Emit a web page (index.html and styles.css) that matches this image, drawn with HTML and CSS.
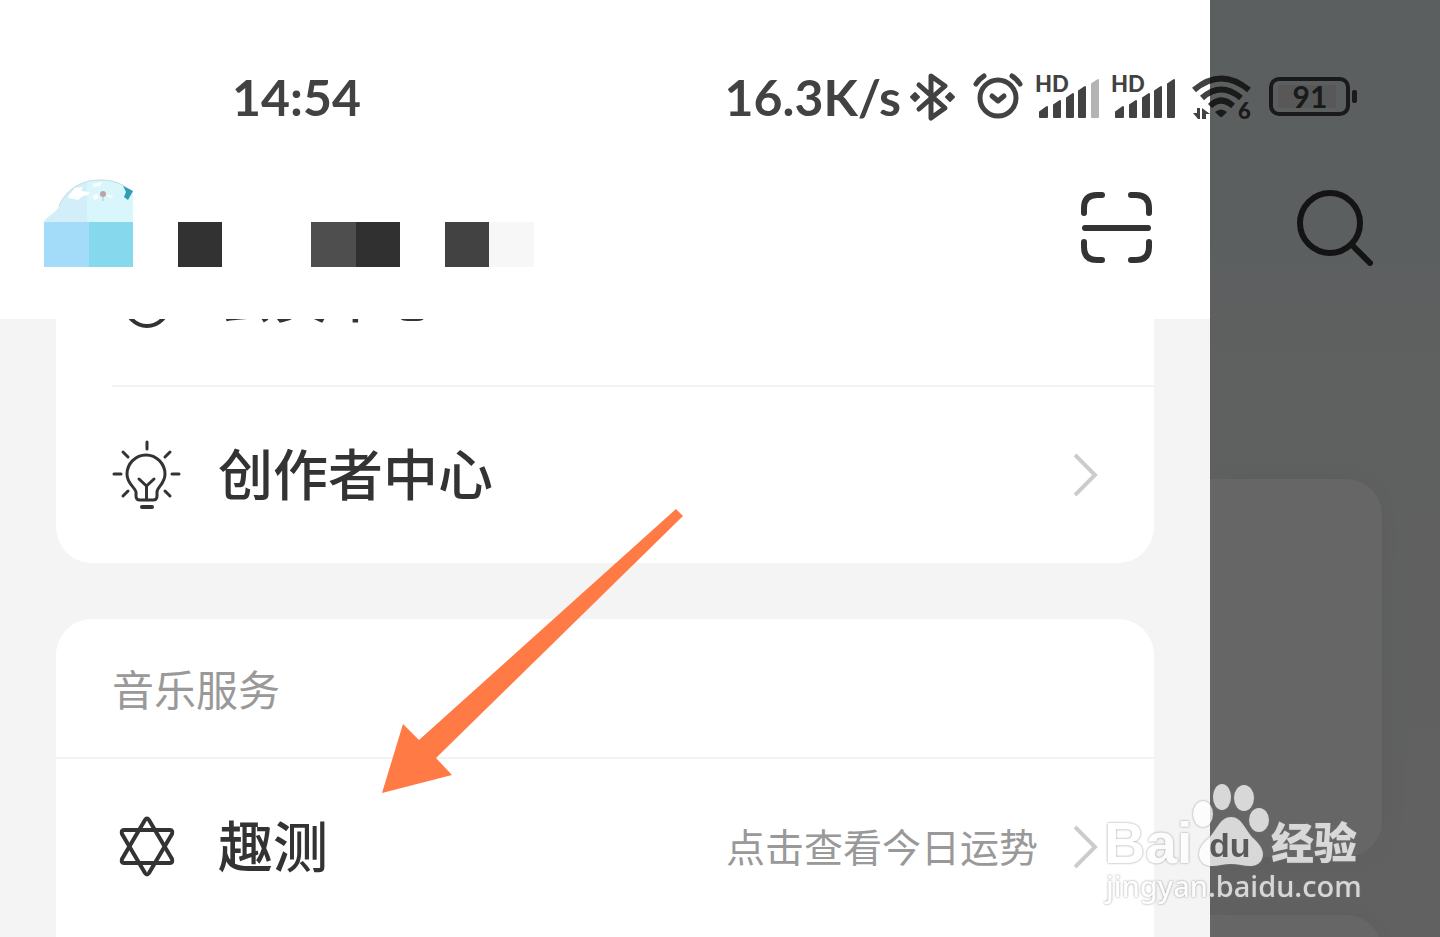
FILE: index.html
```html
<!DOCTYPE html>
<html lang="zh-CN">
<head>
    <meta charset="UTF-8">
    <meta name="viewport" content="width=device-width, initial-scale=1.0">
    <title>音乐服务</title>
    <link rel="stylesheet" href="styles.css">
</head>
<body>

    <div class="screen">
        <main class="drawer">
            <header class="drawer-header">
                <svg class="profile" viewBox="0 0 490 100" width="490" height="100">
                    <path d="M0 44 C4 37 12 35 15 28 C23 10 38 2 57 2 C70 2 79 6 89 14 V44 Z" fill="#d2eef8"/>
                    <path d="M43 3 C60 -1 77 5 89 14 V44 H43 Z" fill="#d8f6fc"/>
                    <path d="M25 17 L31 10 L39 9 L37 13 L46 14 L44 17 L39 18 L34 22 L24 20 Z M49 6 L58 4 L56 8 L50 9 Z M49 18 L53 16 L55 20 L50 22 Z M62 17 L70 18 L66 20 Z" fill="#fff"/>
                    <path d="M15 28 C23 10 38 2 57 2 C70 2 79 6 89 14" fill="none" stroke="#c2dde2"/>
                    <circle cx="59" cy="16" r="3" fill="#b9a5a5"/>
                    <path d="M59 19 V23" stroke="#b9c5c8"/>
                    <path d="M79 8 L89 13 L84 22 L80 19 L82 14 Z" fill="#319db5"/>
                    <rect x="0" y="44" width="45" height="45" fill="#a2dcf9"/>
                    <rect x="45" y="44" width="44" height="45" fill="#86d8ec"/>
                    <rect x="134" y="44" width="44" height="45" fill="#323232"/>
                    <rect x="267" y="44" width="45" height="45" fill="#4e4e4e"/>
                    <rect x="312" y="44" width="44" height="45" fill="#303030"/>
                    <rect x="401" y="44" width="44" height="45" fill="#424242"/>
                    <rect x="445" y="44" width="45" height="45" fill="#f7f7f7"/>
                </svg>
                <button class="icon-button" type="button" aria-label="扫一扫">
                    <svg viewBox="0 0 72 72" width="72" height="72" fill="none" stroke="#333" stroke-width="6" stroke-linecap="round">
                        <path d="M3 21 V16 Q3 3 16 3 H21 M50 3 H55 Q68 3 68 16 V21 M68 50 V55 Q68 68 55 68 H50 M21 68 H16 Q3 68 3 55 V50 M4 36 H67"/>
                    </svg>
                </button>
            </header>

            <div class="list-view">
                <div class="list">
                    <section class="card">
                        <a class="row" href="#vip">
                            <svg class="row-icon" viewBox="0 0 70 70" width="70" height="70" fill="none" stroke="#333" stroke-width="4">
                                <circle cx="35" cy="43" r="21"/>
                            </svg>
                            <span class="row-name">会员中心</span>
                            <svg class="chevron" viewBox="0 0 24 44" width="24" height="44"><path d="M1 2 L21 22 L1 42"/></svg>
                        </a>
                        <hr class="divider inset">
                        <a class="row" href="#creator">
                            <svg class="row-icon" viewBox="0 0 70 70" width="70" height="70" fill="none" stroke="#333" stroke-width="3" stroke-linecap="round" stroke-linejoin="round">
                                <path d="M24 52 C23 47 15 44 15 34 A19 19 0 0 1 53 34 C53 44 45 47 45 52 V56 Q45 60 41 60 H28 Q24 60 24 56 Z M34.500 60 V46 M27 39 L34.500 46 L42 39"/>
                                <path d="M35 2 V9 M2 34 H9 M60 34 H67 M11 12 L16 17 M58 12 L53 17 M11 56 L16 51 M58 56 L53 51"/>
                                <path d="M30 67 H40" stroke-width="4"/>
                            </svg>
                            <span class="row-name">创作者中心</span>
                            <svg class="chevron" viewBox="0 0 24 44" width="24" height="44"><path d="M1 2 L21 22 L1 42"/></svg>
                        </a>
                    </section>

                    <section class="card last">
                        <h2 class="card-title">音乐服务</h2>
                        <hr class="divider">
                        <a class="row" href="#quce">
                            <svg class="row-icon" viewBox="0 0 70 70" width="70" height="70" fill="none" stroke="#333" stroke-width="4" stroke-linejoin="round">
                                <path d="M33 8 Q35 5 37 8 L60 47 Q61 51 58 51 H12 Q9 51 10 47 Z"/>
                                <path d="M33 61 Q35 64 37 61 L60 22 Q61 18 58 18 H12 Q9 18 10 22 Z"/>
                            </svg>
                            <span class="row-name">趣测</span>
                            <span class="row-hint">点击查看今日运势</span>
                            <svg class="chevron" viewBox="0 0 24 44" width="24" height="44"><path d="M1 2 L21 22 L1 42"/></svg>
                        </a>
                    </section>
                </div>
            </div>
        </main>

        <aside class="home">
            <div class="home-header">
                <button class="icon-button" type="button" aria-label="搜索">
                    <svg viewBox="0 0 76 76" width="76" height="76" fill="none" stroke="#333" stroke-width="6" stroke-linecap="round">
                        <circle cx="33" cy="33" r="30"/>
                        <path d="M55 55 L73 73"/>
                    </svg>
                </button>
            </div>
            <div class="home-card"></div>
            <div class="home-card"></div>
        </aside>

        <div class="status-bar">
            <time class="clock">14:54</time>
            <span class="speed">16.3K/s</span>
            <svg class="bluetooth" viewBox="0 0 46 50" width="46" height="50">
                <path d="M9 13 L35 36 L21 46 V4 L35 14 L9 37" fill="none" stroke="#424242" stroke-width="5" stroke-linecap="round" stroke-linejoin="round"/>
                <path d="M5 21 L9 25 L5 29 L1 25 Z M40 21 L44 25 L40 29 L36 25 Z" fill="#424242" stroke="#424242" stroke-width="2" stroke-linejoin="round"/>
            </svg>
            <svg class="alarm" viewBox="0 0 50 50" width="50" height="50" fill="none" stroke="#424242" stroke-width="5" stroke-linecap="round" stroke-linejoin="round">
                <circle cx="25" cy="26" r="18"/>
                <path d="M19 24 L25 29 L31 24"/>
                <path d="M3 12 Q6 7 11 4 M39 4 Q44 7 47 12"/>
            </svg>
            <svg class="signal" viewBox="0 0 64 50" width="64" height="50">
                <text x="-1" y="20">HD</text>
                <path d="M4 45 V40 L11 35 V45 Z M18 45 V33 L24 29 V45 Z M31 45 V26 L37 22 V45 Z M43 45 V19 L49 15 V45 Z"/>
                <path class="weak" d="M56 45 V12 L62 8 V45 Z"/>
            </svg>
            <svg class="signal" viewBox="0 0 64 50" width="64" height="50">
                <text x="-1" y="20">HD</text>
                <path d="M4 45 V40 L11 35 V45 Z M18 45 V33 L24 29 V45 Z M31 45 V26 L37 22 V45 Z M43 45 V19 L49 15 V45 Z M56 45 V12 L62 8 V45 Z"/>
            </svg>
            <svg class="wifi" viewBox="0 0 60 50" width="60" height="50">
                <path d="M2 18 Q29 -5 57 18 M10 26 Q29 9 49 26 M18 34 Q29 23 41 34" fill="none" stroke="#424242" stroke-width="6"/>
                <path d="M23 40 Q29 35 35 40 L31 44 Q29 46 27 44 Z M1 41 H5 V36 H8 V47 H6 Z M10 36 L18 42 H14 V47 H10 Z" fill="#424242"/>
                <text x="46" y="47">6</text>
            </svg>
            <svg class="battery" viewBox="0 0 90 50" width="90" height="50">
                <rect x="9" y="13" width="58" height="23" fill="#dcdcdc"/>
                <rect x="2" y="7" width="77" height="35" rx="8" fill="none" stroke="#424242" stroke-width="4"/>
                <rect x="83" y="18" width="5" height="13" rx="2" fill="#424242"/>
                <text x="41" y="36" text-anchor="middle">91</text>
            </svg>
        </div>

        <div class="scrim"></div>

        <svg class="arrow" viewBox="0 0 304 286" width="304" height="286">
            <path d="M295 0 L302 7 L55 249 L71 266 L1 284 L22 215 L38 231 Z" fill="#ff7a45"/>
        </svg>

        <svg class="watermark" viewBox="0 0 264 126" width="264" height="126">
            <text class="mark-bai" x="2" y="80">Bai</text>
            <ellipse cx="101" cy="31" rx="10" ry="13"/>
            <ellipse cx="120" cy="14" rx="9" ry="13"/>
            <ellipse cx="142" cy="15" rx="10" ry="13"/>
            <ellipse cx="157" cy="37" rx="10" ry="12"/>
            <path d="M129 34 C140 34 143 47 151 55 C159 62 164 70 159 78 C152 87 141 81 129 81 C117 81 106 87 99 78 C94 70 99 61 107 55 C115 47 118 34 129 34 Z"/>
            <text class="mark-du" x="107" y="74">du</text>
            <text class="mark-name" x="169" y="76">经验</text>
            <text class="mark-url" x="4" y="114">jingyan.baidu.com</text>
        </svg>
    </div>

</body>
</html>
```

FILE: styles.css
```css
* {
    box-sizing: border-box;
}

body {
    margin: 0;
    font-family: 'Noto Sans CJK SC', sans-serif;
    color: #333;
}

.screen {
    position: relative;
    display: flex;
    height: 100vh;
    overflow: hidden;
}

.drawer {
    flex: 1;
    display: flex;
    flex-direction: column;
    background-color: #f4f4f4;
}

.drawer-header {
    display: flex;
    align-items: center;
    justify-content: space-between;
    padding: 178px 57px 41px 44px;
    background-color: #fff;
}

.icon-button {
    padding: 0;
    border: none;
    background: none;
    cursor: pointer;
}

.icon-button svg,
.profile {
    display: block;
}

/* the list is scrolled, the first row is half under the header */
.list-view {
    flex: 1;
    display: flex;
    overflow: hidden;
}

.list {
    flex: 1;
    display: flex;
    flex-direction: column;
    gap: 56px;
    margin-top: -110px;
    padding: 0 56px;
}

.card {
    border-radius: 36px;
    background-color: #fff;
}

.card.last {
    flex: 1;
    border-radius: 36px 36px 0 0;
}

.card-title {
    margin: 0;
    padding: 0 56px;
    font-size: 42px;
    font-weight: 400;
    line-height: 138px;
    color: #999;
}

.row {
    display: flex;
    align-items: center;
    height: 176px;
    padding: 0 56px;
    color: #333;
    text-decoration: none;
}

.row-icon {
    margin-right: 36px;
}

.row-name {
    flex: 1;
    padding-bottom: 8px;
    font-size: 55px;
    font-weight: 500;
    line-height: 80px;
}

.row-hint {
    margin-right: 36px;
    padding-bottom: 4px;
    font-size: 39px;
    line-height: 56px;
    color: #999;
}

.chevron {
    fill: none;
    stroke: #ccc;
    stroke-width: 4px;
}

.divider {
    height: 2px;
    margin: 0;
    border: none;
    background-color: #f2f2f2;
}

.divider.inset {
    margin-left: 56px;
}

.home {
    display: flex;
    flex-direction: column;
    gap: 58px;
    width: 230px;
    overflow: hidden;
    background: linear-gradient(#e4edee, #e6eeef 25%, #eeeff1 40%, #f0f3f0);
}

.home-header {
    display: flex;
    flex: none;
    align-items: flex-start;
    justify-content: flex-end;
    height: 421px;
    padding: 190px 67px 0 0;
}

.home-card {
    flex: none;
    height: 378px;
    margin-right: 58px;
    border-radius: 0 36px 36px 0;
    background-color: #fff;
    box-shadow: 0 0 36px rgba(0, 0, 0, 0.04);
}

.status-bar {
    position: absolute;
    top: 0;
    left: 0;
    right: 0;
    display: flex;
    align-items: center;
    height: 194px;
    padding: 0 81px 0 232px;
    font-family: Lato, sans-serif;
    font-size: 50px;
    font-weight: 700;
    color: #424242;
}

.status-bar svg {
    overflow: visible;
}

.status-bar text {
    font-size: 22px;
    font-weight: 900;
    fill: #424242;
}

.clock {
    flex: 1;
}

.bluetooth {
    margin: 0 17px 0 9px;
}

.alarm {
    margin-right: 13px;
}

.signal {
    margin-right: 12px;
    fill: #424242;
    stroke: #424242;
    stroke-width: 2px;
    stroke-linejoin: round;
}

.signal text {
    stroke: none;
}

.signal .weak {
    fill: #b4b4b4;
    stroke: #b4b4b4;
}

.wifi {
    margin: 0 17px 0 4px;
}

.status-bar .battery text {
    font-size: 30px;
    font-weight: 700;
}

/* dims everything right of the drawer */
.scrim {
    position: absolute;
    top: 0;
    right: 0;
    bottom: 0;
    width: 230px;
    background-color: rgba(0, 0, 0, 0.6);
}

.arrow {
    position: absolute;
    top: 509px;
    left: 381px;
}

.watermark {
    position: absolute;
    right: 74px;
    bottom: 28px;
    overflow: visible;
    fill: #fff;
    opacity: 0.75;
    filter: drop-shadow(0 0 1px #777);
}

.mark-bai {
    font: 700 57px 'Liberation Sans', sans-serif;
}

.mark-du {
    font: 700 34px 'Liberation Sans', sans-serif;
    fill: #555;
}

.mark-name {
    font: 900 43px 'Noto Sans CJK SC', sans-serif;
}

.mark-url {
    font: 500 29px 'Noto Sans', sans-serif;
}
```
